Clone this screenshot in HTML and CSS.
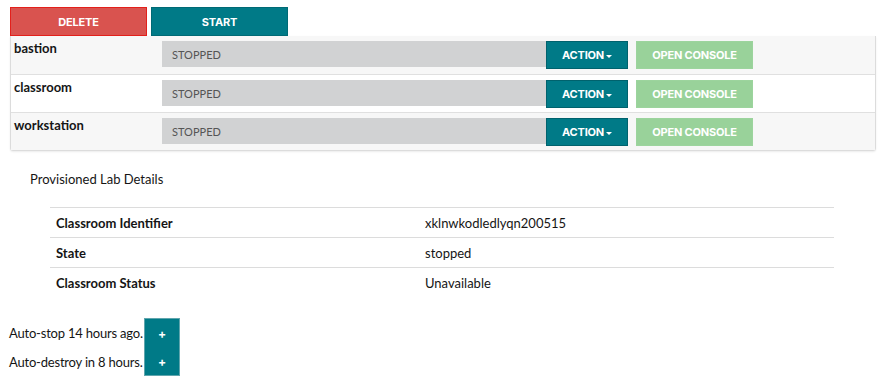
FILE: index.html
```html
<!DOCTYPE html>
<html lang="en">
<head>
    <meta charset="UTF-8">
    <title>Lab</title>
    <link rel="stylesheet" href="styles.css">
</head>
<body>
    <div class="toolbar">
        <button class="btn btn-delete">DELETE</button>
        <button class="btn btn-start">START</button>
    </div>

    <div class="vms">
        <div class="vm">
            <div class="vm-name">bastion</div>
            <div class="vm-state"><span>STOPPED</span></div>
            <button class="btn btn-action">ACTION<span class="caret"></span></button>
            <button class="btn btn-console">OPEN CONSOLE</button>
        </div>
        <div class="vm">
            <div class="vm-name">classroom</div>
            <div class="vm-state"><span>STOPPED</span></div>
            <button class="btn btn-action">ACTION<span class="caret"></span></button>
            <button class="btn btn-console">OPEN CONSOLE</button>
        </div>
        <div class="vm">
            <div class="vm-name">workstation</div>
            <div class="vm-state"><span>STOPPED</span></div>
            <button class="btn btn-action">ACTION<span class="caret"></span></button>
            <button class="btn btn-console">OPEN CONSOLE</button>
        </div>
    </div>

    <div class="details">
        <p class="details-title">Provisioned Lab Details</p>
        <table class="details-table">
            <tr>
                <th>Classroom Identifier</th>
                <td>xklnwkodledlyqn200515</td>
            </tr>
            <tr>
                <th>State</th>
                <td>stopped</td>
            </tr>
            <tr>
                <th>Classroom Status</th>
                <td>Unavailable</td>
            </tr>
        </table>
    </div>

    <div class="timers">
        <span class="timer-text">Auto-stop 14 hours ago.</span>
        <button class="btn btn-plus btn-plus-first">+</button>
        <span class="timer-text">Auto-destroy in 8 hours.</span>
        <button class="btn btn-plus btn-plus-last">+</button>
    </div>
</body>
</html>
```

FILE: styles.css
```css
body {
    font-family: Lato, "Open Sans", sans-serif;
    font-size: 13px;
    color: #151515;
    background: #fff;
    margin: 0;
    padding: 7px 7px 0 10px;
}

.btn {
    font-family: Inter, sans-serif;
    font-weight: 700;
    font-size: 11px;
    letter-spacing: -0.2px;
    color: #fff;
    border: 1px solid transparent;
    border-radius: 0;
    cursor: pointer;
    padding: 0;
}

.toolbar {
    display: flex;
    gap: 4px;
}

.btn-delete,
.btn-start {
    width: 137px;
    height: 29px;
}

.btn-delete {
    background-color: #d9534f;
    border-color: #e3201b;
}

.btn-start {
    background-color: #007a87;
    border-color: #006a75;
}

.vms {
    border: 1px solid #dcdcdc;
    border-top: none;
    border-radius: 0 0 3px 3px;
    box-shadow: 0 1px 2px rgba(0, 0, 0, 0.08);
}

.vm {
    display: flex;
    align-items: flex-start;
    height: 38px;
    padding-top: 5px;
    box-sizing: border-box;
    background-color: #f7f7f7;
    border-top: 1px solid #e0e0e0;
}

.vm:first-child {
    border-top: none;
}

.vm:nth-child(2) {
    background-color: #fff;
}

.vm-name {
    width: 148px;
    padding-left: 3px;
    font-weight: 700;
    line-height: 15px;
}

.vm-state {
    width: 384px;
    height: 26px;
    background-color: #d1d2d3;
    display: flex;
    align-items: center;
    padding-left: 10px;
    box-sizing: border-box;
    font-size: 11px;
    color: #555;
}

.btn-action {
    width: 82px;
    height: 28px;
    background-color: #007a87;
    border-color: #00626d;
    display: flex;
    align-items: center;
    justify-content: center;
}

.caret {
    display: inline-block;
    margin-left: 2px;
    margin-top: 2px;
    border-top: 3px solid #fff;
    border-left: 3px solid transparent;
    border-right: 3px solid transparent;
}

.btn-console {
    width: 117px;
    height: 28px;
    margin-left: 8px;
    background-color: #99d29a;
    border-color: #9cd49d;
}

.details {
    padding: 0 0 0 20px;
}

.details-title {
    margin: 20px 0 20px 0;
}

.details-table {
    border-collapse: collapse;
    margin-left: 20px;
    width: 784px;
}

.details-table th,
.details-table td {
    text-align: left;
    padding: 0 6px;
    height: 29px;
    border-top: 1px solid #dcdcdc;
}

.details-table th {
    width: 357px;
    font-weight: 700;
}

.timers {
    display: grid;
    grid-template-columns: 135px 36px;
    grid-auto-rows: 29px;
    align-items: center;
    margin-top: 21px;
    margin-left: -1px;
}

.timer-text {
    white-space: nowrap;
    letter-spacing: -0.2px;
}

.btn-plus {
    width: 36px;
    height: 29px;
    background-color: #007a87;
    border-color: #5fa5ad;
    font-size: 12px;
    letter-spacing: 0;
}

.btn-plus-first {
    border-bottom: none;
}

.btn-plus-last {
    border-top: none;
}
```
